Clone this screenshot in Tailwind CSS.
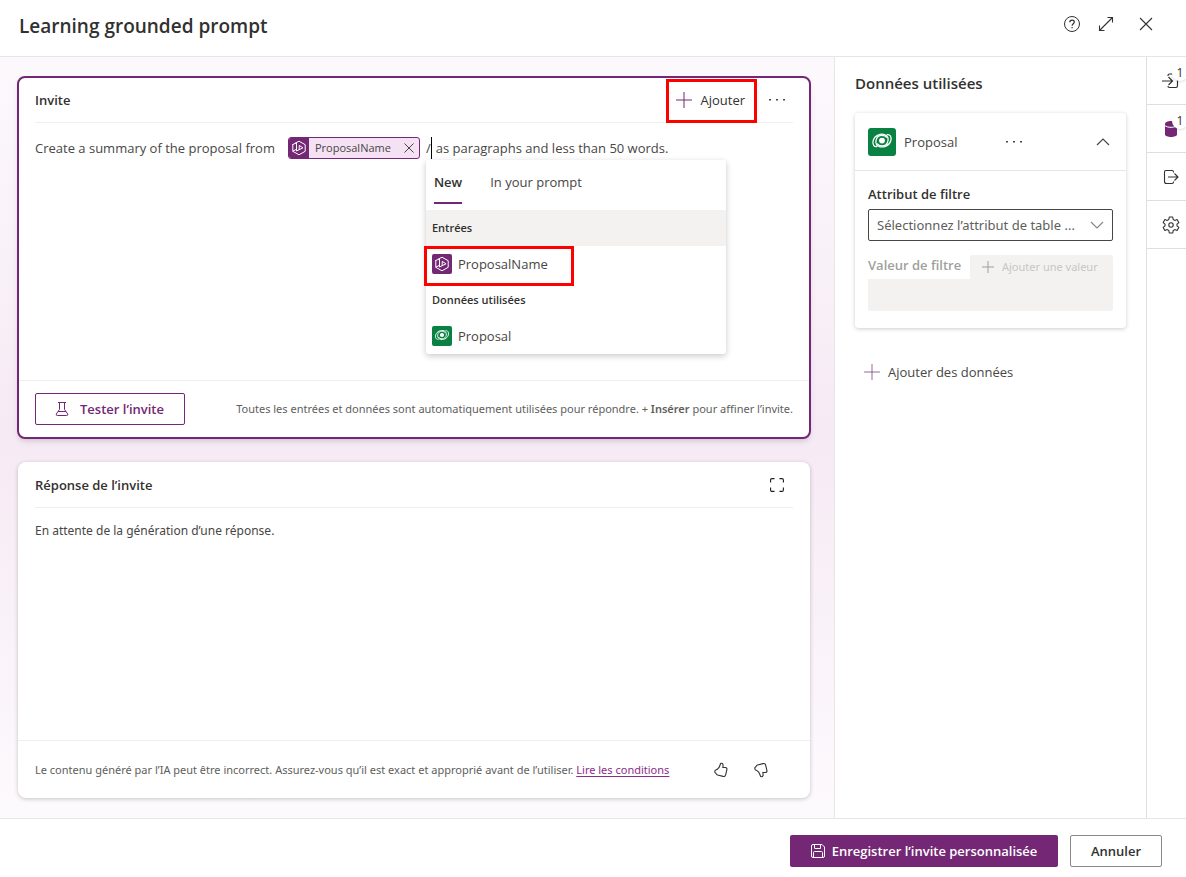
<!DOCTYPE html>
<html lang="fr">
<head>
<meta charset="utf-8">
<meta name="viewport" content="width=device-width, initial-scale=1">
<title>Learning grounded prompt</title>
<script src="https://cdn.jsdelivr.net/npm/@tailwindcss/browser@4"></script>
</head>
<body class="flex min-h-screen flex-col bg-white font-['Open_Sans','Noto_Sans',sans-serif] text-[13px] leading-5 text-[#484644]">

<!-- Shared icon shapes -->
<svg class="hidden" aria-hidden="true">
  <symbol id="i-plus" viewBox="0 0 16 16"><path d="M8 0v16M0 8h16" fill="none" stroke="currentColor"/></symbol>
  <symbol id="i-dots" viewBox="0 0 16 16"><path d="M0 7h2v1.500H0zM7 7h2v1.500H7zM14 7h2v1.500h-2z" fill="currentColor"/></symbol>
  <symbol id="i-input" viewBox="0 0 20 20"><g fill="none" stroke="currentColor" stroke-linejoin="round" stroke-linecap="round"><path d="M6.500 5 10 3.200l6.200 3.500v6.600L10 16.800l-6.200-3.500V6.500"/><path d="M3.800 6.500 7.500 4.800v8.200l6.500-3.200-3.800-2.400v4.100M4 13.100l3.500-1.800"/></g></symbol>
  <symbol id="i-dataverse" viewBox="0 0 20 20"><g fill="none" stroke="currentColor" stroke-width=".9"><path d="M12.300 4.900C9 3.600 4.700 5.400 3.700 8.900c-.8 3 .7 4.900 2.900 4.300"/><path d="M7.700 13.100c3.300 1.300 7.600-.5 8.600-4 .8-3-.7-4.900-2.900-4.300"/><path d="M7.700 13.100C4.300 11.600 5.200 5.200 10 5.200c1.500 0 2.800.6 3.400 1.700"/><path d="M12.300 4.900c3.400 1.500 2.500 7.900-2.300 7.900-1.500 0-2.800-.6-3.400-1.700"/></g><circle cx="10" cy="9" r="2.100" fill="currentColor"/></symbol>
</svg>

<header class="flex h-[57px] shrink-0 items-center justify-between border-b border-[#e8e6e5] pr-[33px] pb-1 pl-[19px]">
  <h1 class="text-[19px] leading-6 font-semibold text-[#323130]">Learning grounded prompt</h1>
  <div class="flex items-center pb-1 text-[#323130]">
    <button type="button" aria-label="Aide" class="mr-[17px] h-[18px] w-[18px]"><svg class="h-[18px] w-[18px]" viewBox="0 0 18 18" fill="none" stroke="currentColor"><circle cx="9" cy="9" r="7.500"/><path d="M6.800 7.300c0-3 4.500-2.900 4.500-.2 0 1.700-2.200 1.700-2.200 3.700M9.100 12v1.300" stroke-width="1.200"/></svg></button>
    <button type="button" aria-label="Agrandir" class="mr-[25px] h-4 w-4"><svg class="h-4 w-4" viewBox="0 0 16 16" fill="none" stroke="currentColor" stroke-width="1.100"><path d="M1.500 14.500l13-13M9.500 1.500h5v5M1.500 9.500v5h5"/></svg></button>
    <button type="button" aria-label="Fermer" class="h-[14px] w-[14px]"><svg class="h-[14px] w-[14px]" viewBox="0 0 14 14" fill="none" stroke="currentColor" stroke-width="1.100"><path d="m1 1 12 12M13 1 1 13"/></svg></button>
  </div>
</header>

<div class="flex grow">
  <main class="flex min-w-0 grow flex-col gap-[23px] bg-linear-to-b from-[#fcf9fd] via-[#f6eaf4] to-[#fdfafd] pt-[19px] pr-[23px] pb-5 pl-[17px]">

    <!-- Prompt editor -->
    <section class="flex grow flex-col rounded-lg border-2 border-[#742774] bg-white shadow-md">
      <div class="mx-4 flex h-[45px] items-center justify-between border-b border-[#f0efee]">
        <h2 class="font-semibold text-[#323130]">Invite</h2>
        <div class="flex items-center gap-[13px]">
          <button type="button" class="relative flex items-center gap-2 pr-[11px] pl-[9px] text-[#323130]">
            <svg class="h-4 w-4 text-[#742774]"><use href="#i-plus"/></svg>Ajouter
            <span class="pointer-events-none absolute -inset-x-px -top-[11px] -bottom-[13px] border-[3px] border-[#ff0000]"></span>
          </button>
          <button type="button" aria-label="Plus d’options" class="mr-2 h-4 w-4"><svg class="h-4 w-4"><use href="#i-dots"/></svg></button>
        </div>
      </div>
      <div role="textbox" aria-label="Texte de l’invite" class="mx-4 flex grow items-start pt-[14px] leading-[22px]">
        <span>Create a summary of the proposal from</span>
        <span class="mr-[6px] ml-[13px] flex h-[22px] w-[132px] items-center overflow-hidden rounded-[3px] border border-[#742774] bg-[#f5e1f4]">
          <span class="flex h-full w-5 shrink-0 items-center justify-center bg-[#742774] text-white"><svg class="h-5 w-5"><use href="#i-input"/></svg></span>
          <span class="grow pl-[6px] text-[11px]">ProposalName</span>
          <button type="button" aria-label="Retirer ProposalName" class="mr-[5px] h-[10px] w-[10px]"><svg class="h-[10px] w-[10px]" viewBox="0 0 10 10" fill="none" stroke="currentColor"><path d="m.5.5 9 9M9.500.5l-9 9"/></svg></button>
        </span>
        <span class="relative mr-1 border-r border-black">/
          <!-- Suggestion menu opened by the slash -->
          <div class="absolute top-[23px] left-0 z-10 w-[300px] rounded-[3px] bg-white leading-5 shadow-[0_2px_6px_rgba(0,0,0,0.22)]">
            <div role="tablist" class="flex h-[50px] items-start gap-7 px-2 pt-[12px]">
              <button type="button" role="tab" aria-selected="true" class="h-8 border-b-2 border-[#742774] pb-[11px] font-semibold text-[#323130]">New</button>
              <button type="button" role="tab" aria-selected="false" class="h-8 pb-[12px]">In your prompt</button>
            </div>
            <div class="flex h-9 items-center bg-[#f3f2f1] px-[6px] text-[11px] font-semibold text-[#323130]">Entrées</div>
            <button type="button" class="relative flex h-9 w-full items-center gap-[6px] px-[6px]">
              <span class="h-5 w-5 rounded-[2px] bg-[#742774] text-white"><svg class="h-5 w-5"><use href="#i-input"/></svg></span>ProposalName
              <span class="pointer-events-none absolute top-0 -left-[2px] h-10 w-[150px] border-[3px] border-[#ff0000]"></span>
            </button>
            <div class="flex h-9 items-center px-[6px] text-[11px] font-semibold text-[#323130]">Données utilisées</div>
            <button type="button" class="flex h-9 w-full items-center gap-[6px] px-[6px]">
              <span class="h-5 w-5 rounded-[2px] bg-[#088142] text-white"><svg class="h-5 w-5"><use href="#i-dataverse"/></svg></span>Proposal
            </button>
          </div>
        </span>
        <span>as paragraphs and less than 50 words.</span>
      </div>
      <div class="flex h-[57px] items-center justify-between border-t border-[#f0efee] px-4">
        <button type="button" class="flex h-8 w-[150px] items-center gap-[10px] rounded-[2px] border border-[#742774] pl-[18px] font-semibold text-[#742774]">
          <svg class="h-4 w-4" viewBox="0 0 16 16" fill="none" stroke="currentColor"><path d="M4 1.500h8M5.500 1.500v7L2.300 13q-.5 1.500 1 1.500h9.400q1.500 0 1-1.500l-3.200-4.500v-7M4 10.500h8"/></svg>Tester l’invite
        </button>
        <p class="font-['Noto_Sans',sans-serif] text-[11px] text-[#605e5c]">Toutes les entrées et données sont automatiquement utilisées pour répondre. + <b class="font-semibold">Insérer</b> pour affiner l’invite.</p>
      </div>
    </section>

    <!-- Prompt response -->
    <section class="mr-px ml-px flex h-[336px] flex-col rounded-lg bg-white shadow-[0_1px_4px_rgba(0,0,0,0.22)]">
      <div class="mx-[17px] flex h-[46px] items-center justify-between border-b border-[#f0efee]">
        <h2 class="font-semibold text-[#323130]">Réponse de l’invite</h2>
        <button type="button" aria-label="Plein écran" class="mr-[9px] h-[14px] w-[14px] text-[#201f1e]"><svg class="h-[14px] w-[14px]" viewBox="0 0 14 14" fill="none" stroke="currentColor" stroke-width="1.100"><path d="M.6 4.500V2Q.6.6 2 .6h2.500M9.500.6H12q1.400 0 1.400 1.400v2.500M13.400 9.500V12q0 1.400-1.400 1.400H9.500M4.500 13.400H2Q.6 13.400.6 12V9.500"/></svg></button>
      </div>
      <p class="mx-[17px] grow pt-[13px] font-['Noto_Sans',sans-serif] text-[12px]">En attente de la génération d’une réponse.</p>
      <div class="flex h-[58px] items-center border-t border-[#f0efee] px-[17px] font-['Noto_Sans',sans-serif] text-[11px] text-[#605e5c]">
        <p>Le contenu généré par l’IA peut être incorrect. Assurez-vous qu’il est exact et approprié avant de l’utiliser. <a href="#" class="text-[#8a2d8a] underline underline-offset-2">Lire les conditions</a></p>
        <button type="button" aria-label="J’aime" class="ml-11 h-4 w-4 text-[#323130]"><svg class="h-4 w-4" viewBox="0 0 16 16" fill="none" stroke="currentColor" stroke-width="1.100" stroke-linejoin="round"><path d="M8.300 1.200c1.700 0 2.200 1.300 1.500 4.300h2.500c1.300 0 1.900.9 1.600 2.200l-1.200 5c-.3 1.400-1.300 2-2.600 1.700L4.600 13c-.7-.2-1.100-.6-1.400-1.200-.2-.5-.6-.8-1-1-.7-.3-.4-2.400.5-2.700C5.500 7 6.700 4.900 7.400 2c.1-.5.4-.8.900-.8z"/></svg></button>
        <button type="button" aria-label="Je n’aime pas" class="ml-6 h-4 w-4 text-[#323130]"><svg class="h-4 w-4" viewBox="0 0 16 16" fill="none" stroke="currentColor" stroke-width="1.100" stroke-linejoin="round"><path d="M8.300 14.800c1.700 0 2.200-1.300 1.500-4.300h2.500c1.300 0 1.900-.9 1.600-2.200l-1.200-5c-.3-1.400-1.300-2-2.600-1.700L4.600 3c-.7.2-1.100.6-1.400 1.200-.2.5-.6.8-1 1-.7.300-.4 2.400.5 2.700C5.500 9 6.700 11.100 7.400 14c.1.500.4.800.9.800z"/></svg></button>
      </div>
    </section>
  </main>

  <!-- Data used -->
  <aside class="w-[312px] shrink-0 border-l border-[#e8e6e5] pt-4 pr-5 pl-5">
    <h2 class="text-[15px] leading-5 font-semibold text-[#323130]">Données utilisées</h2>
    <div class="mt-5 rounded-[4px] bg-white shadow-[0_1px_4px_rgba(0,0,0,0.2)]">
      <div class="flex h-[58px] items-center border-b border-[#e8e6e5] pr-4 pl-[13px]">
        <span class="h-7 w-7 rounded-[3px] bg-[#088142] text-white"><svg class="h-7 w-7"><use href="#i-dataverse"/></svg></span>
        <span class="ml-2 w-[102px]">Proposal</span>
        <button type="button" aria-label="Plus d’options pour Proposal" class="h-4 w-4"><svg class="h-4 w-4"><use href="#i-dots"/></svg></button>
        <button type="button" aria-label="Réduire" class="ml-auto h-3 w-[14px]"><svg class="h-3 w-[14px]" viewBox="0 0 14 12" fill="none" stroke="currentColor" stroke-width="1.200"><path d="m1 9 6-6 6 6"/></svg></button>
      </div>
      <div class="px-[13px] pt-[13px] pb-[17px]">
        <label for="attr" class="block font-semibold text-[#323130]">Attribut de filtre</label>
        <div class="relative mt-[5px]">
          <select id="attr" class="h-8 w-full appearance-none rounded-[2px] border border-[#484644] bg-white pr-7 pl-2 font-['Noto_Sans',sans-serif] text-[13px] text-[#605e5c]"><option>Sélectionnez l’attribut de table ...</option></select>
          <svg class="pointer-events-none absolute top-[10px] right-[9px] h-3 w-[14px]" viewBox="0 0 14 12" fill="none" stroke="#8a8886" stroke-width="1.200"><path d="m1 3 6 6 6-6"/></svg>
        </div>
        <div class="mt-[14px] flex items-start justify-between">
          <label for="val" class="font-semibold text-[#a19f9d]">Valeur de filtre</label>
          <button type="button" disabled class="flex h-6 w-[143px] items-center gap-2 rounded-t-[2px] bg-[#f3f2f1] pl-3 font-['Noto_Sans',sans-serif] text-[11px] text-[#c8c6c4]"><svg class="h-3 w-3 text-[#a19f9d]" viewBox="0 0 12 12" fill="none" stroke="currentColor"><path d="M6 0v12M0 6h12"/></svg>Ajouter une valeur</button>
        </div>
        <input id="val" type="text" disabled class="block h-8 w-full rounded-b-[2px] bg-[#f3f2f1] px-2">
      </div>
    </div>
    <button type="button" class="mt-[34px] ml-[9px] flex items-center gap-2"><svg class="h-4 w-4 text-[#742774]/70"><use href="#i-plus"/></svg>Ajouter des données</button>
  </aside>

  <!-- Panel switcher -->
  <nav aria-label="Volets" class="flex w-10 shrink-0 flex-col border-l border-[#e1dfdd] text-[#323130]">
    <button type="button" aria-label="Entrées" class="relative flex h-12 items-center justify-center border-b border-[#e1dfdd] pl-2">
      <svg class="h-4 w-[18px]" viewBox="0 0 18 16" fill="none" stroke="currentColor" stroke-width="1.200"><path d="M0 8h10.500M6.500 4l4 4-4 4M6 3V2.500q0-1.500 1.500-1.500H14q1.500 0 1.500 1.500v10q0 2-1.500 2H7.500Q6 14.500 6 13"/></svg>
      <span class="absolute top-[8px] -right-[2px] flex h-4 w-4 items-center justify-center rounded-full bg-white text-[12px] shadow">1</span>
    </button>
    <button type="button" aria-label="Données utilisées" class="relative flex h-12 items-center justify-center border-b border-[#e1dfdd] pl-2">
      <svg class="h-4 w-3" viewBox="0 0 12 16" fill="#742774"><path d="M0 3c0-4 12-4 12 0v10.500c0 3.300-12 3.300-12 0z"/><path d="M0 4.500c1.500 2.400 10.500 2.400 12 0" fill="none" stroke="#fff"/></svg>
      <span class="absolute top-[8px] -right-[2px] flex h-4 w-4 items-center justify-center rounded-full bg-white text-[12px] shadow">1</span>
    </button>
    <button type="button" aria-label="Sortie" class="flex h-12 items-center justify-center border-b border-[#e1dfdd] pl-2">
      <svg class="h-4 w-4" viewBox="0 0 16 16" fill="none" stroke="currentColor" stroke-width="1.100"><path d="M10.500 3.500V3Q10.500 1.500 9 1.500H3Q1.500 1.500 1.500 3v9.500q0 2 2 2H9q1.500 0 1.500-1.500v-.5M5 8h10M11.500 4.500 15 8l-3.500 3.500"/></svg>
    </button>
    <button type="button" aria-label="Paramètres" class="flex h-12 items-center justify-center border-b border-[#e1dfdd] pl-2">
      <svg class="h-[18px] w-[18px]" viewBox="0 0 18 18" fill="none" stroke="currentColor" stroke-width="1.100" stroke-linejoin="round"><path d="M7.300 1h3.400l.5 2.500 1.500.9 2.400-.8 1.700 3L15 8.200v1.600l1.800 1.600-1.700 3-2.400-.8-1.500.9-.5 2.500H7.300l-.5-2.500-1.500-.9-2.400.8-1.700-3L3 9.800V8.200L1.200 6.600l1.700-3 2.400.8 1.500-.9z"/><circle cx="9" cy="9" r="2.200"/></svg>
    </button>
  </nav>
</div>

<footer class="flex h-[59px] shrink-0 items-center justify-end gap-3 border-t border-[#e8e6e5] px-6 pt-[6px]">
  <button type="button" class="flex h-8 w-[268px] items-center justify-center gap-[7px] rounded-[2px] bg-[#742774] font-semibold text-white">
    <svg class="h-[14px] w-[14px]" viewBox="0 0 14 14" fill="none" stroke="currentColor"><path d="M.5 2Q.5.5 2 .5h9L13.500 3v9q0 1.500-1.500 1.500H2Q.5 13.500.5 12zM3.500.5V4Q3.500 4.500 4 4.500h5.500V.5M2.500 13.500V8.500Q2.500 7.500 3.500 7.500h7q1 0 1 1v5"/></svg>Enregistrer l’invite personnalisée
  </button>
  <button type="button" class="h-8 w-[92px] rounded-[2px] border border-[#8a8886] font-semibold text-[#323130]">Annuler</button>
</footer>
</body>
</html>
